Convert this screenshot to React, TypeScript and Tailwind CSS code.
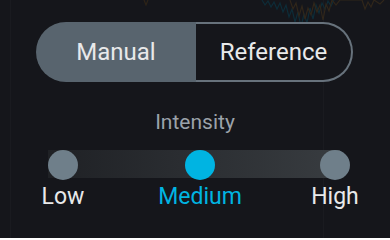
export default function App() {
  const knobs = [
    { label: "Low", active: false },
    { label: "Medium", active: true },
    { label: "High", active: false },
  ];

  return (
    <div className="relative w-[390px] h-[238px] overflow-hidden bg-[#15161b] font-['Roboto',sans-serif]">
      {/* faint canvas behind the panel */}
      <div className="absolute left-[10px] top-0 h-full w-px bg-[#1a1b20]" />
      <div className="absolute left-[323px] top-0 h-full w-px bg-[#1a1b20]" />
      <svg
        className="absolute left-0 top-0"
        width="390"
        height="32"
        viewBox="0 0 390 32"
        fill="none"
      >
        <polyline
          points="262,0 265,5 268,1 271,7 274,2 277,9 280,3 283,12 286,5 289,17 292,9 295,22 298,12 301,27 304,14 307,23 310,8 313,19 316,5 319,13 322,3 325,9 328,1 331,6 334,0"
          stroke="#0d2c38"
          strokeWidth="1.2"
        />
        <polyline
          points="290,0 293,9 296,3 299,16 302,6 305,19 308,8 311,15 314,3 317,12 320,5 323,20 326,4 329,11 332,0 336,5 340,0 362,0 365,9 368,2 371,7 374,0 380,4 384,0"
          stroke="#30261a"
          strokeWidth="1.2"
        />
        <polyline points="144,0 146,5 148,0" stroke="#2e2418" strokeWidth="1.2" />
      </svg>

      <div className="relative pt-[22px]">
        <div className="ml-[36px] flex h-[60px] w-[317px] text-[24px] text-[#e8e9ea]">
          <div className="flex w-[160px] items-center justify-center rounded-l-full bg-[#58646e]">
            Manual
          </div>
          <div className="flex flex-1 items-center justify-center rounded-r-full border-2 border-l-0 border-[#67727c] bg-[#15161b]">
            Reference
          </div>
        </div>

        <div className="mt-[28px] text-center text-[21px] leading-[24px] text-[#9ba2aa]">
          Intensity
        </div>

        <div className="relative ml-[48px] mt-[16px] w-[302px]">
          <div className="absolute left-0 top-0 h-[28px] w-[292px] bg-gradient-to-r from-[#1f2125] to-[#383c40]" />
          <div className="relative flex justify-between">
            {knobs.map((k) => (
              <div
                key={k.label}
                className={`h-[30px] w-[30px] rounded-full ${
                  k.active ? "ml-[2px] bg-[#00b4e2]" : "bg-[#6f7f8a]"
                }`}
              />
            ))}
          </div>
          <div className="mt-[3px] flex justify-between text-[23px] leading-[28px]">
            {knobs.map((k) => (
              <div
                key={k.label}
                className={`flex w-[30px] justify-center whitespace-nowrap ${
                  k.active ? "ml-[2px] text-[#00b4e2]" : "text-[#e8e9ea]"
                }`}
              >
                {k.label}
              </div>
            ))}
          </div>
        </div>
      </div>
    </div>
  );
}
